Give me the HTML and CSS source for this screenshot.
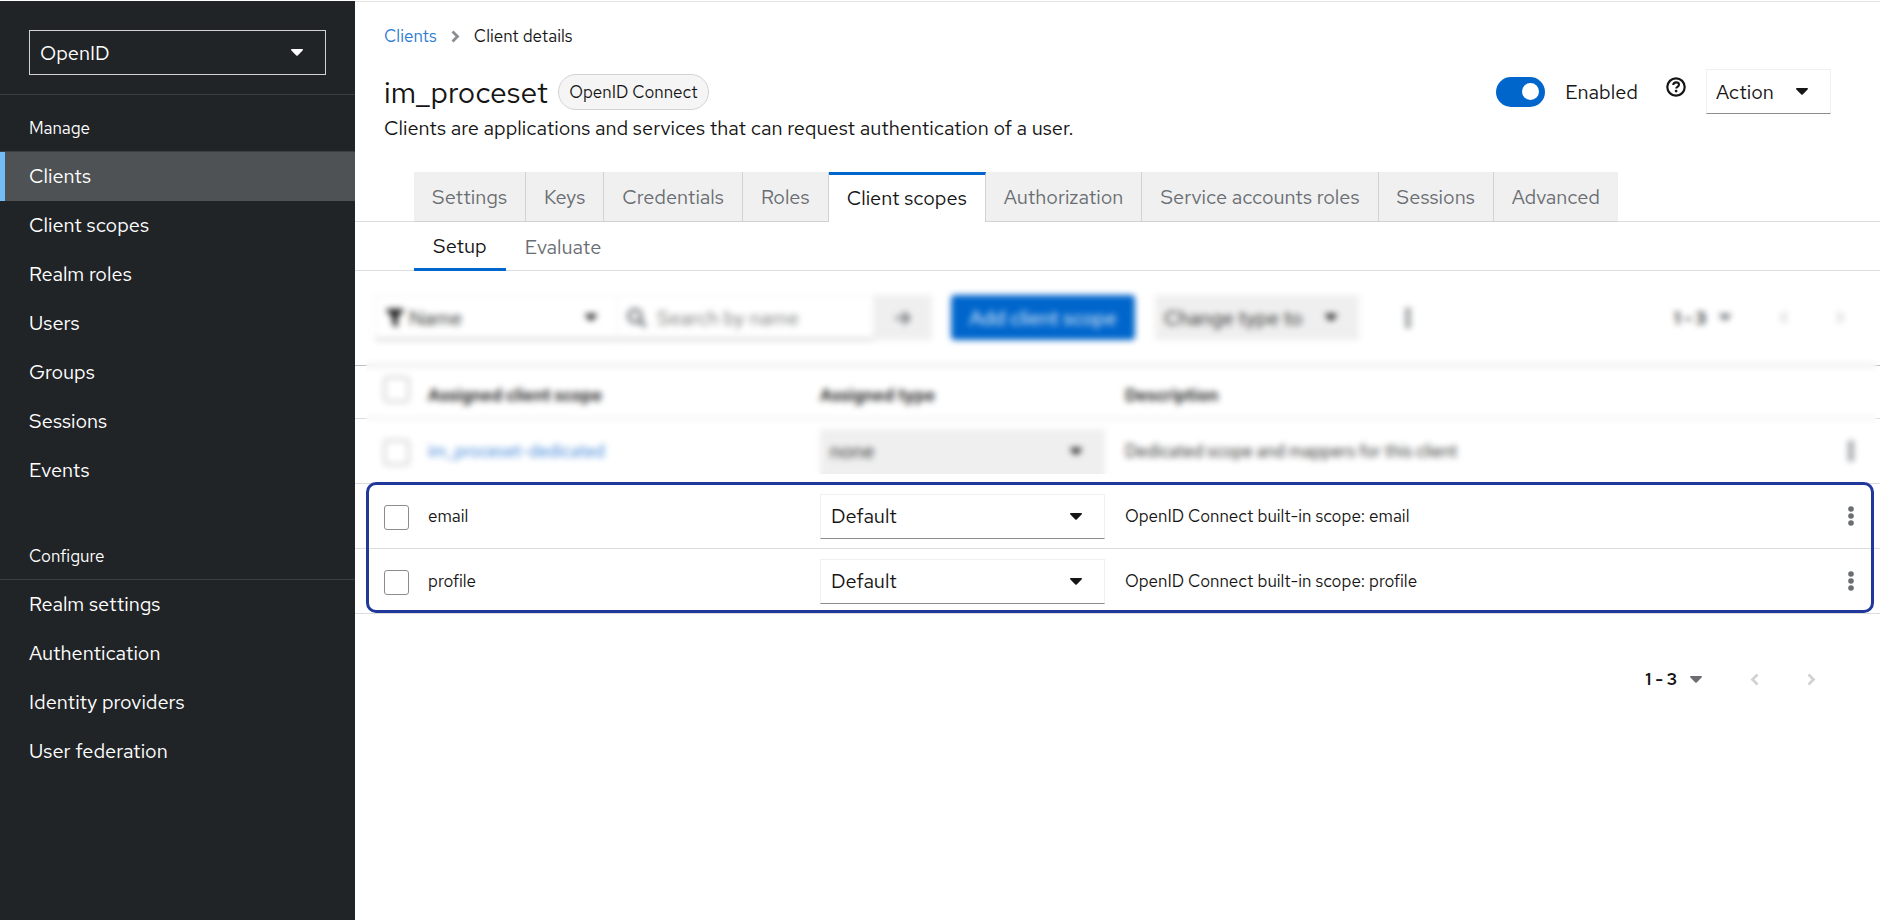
FILE: index.html
```html
<!DOCTYPE html>
<html lang="en">
<head>
<meta charset="utf-8">
<meta name="viewport" content="width=device-width, initial-scale=1">
<title>Client details</title>
<link rel="stylesheet" href="styles.css">
</head>
<body>
<svg class="sprite" aria-hidden="true">
  <symbol id="caret" viewBox="0 0 12 7"><path d="M1 0h10a1 1 0 0 1 .6 1.600L6.700 6.500a1 1 0 0 1-1.400 0L.4 1.600A1 1 0 0 1 1 0z"/></symbol>
  <symbol id="kebab" viewBox="0 0 6 20"><circle cx="3" cy="3" r="2.800"/><circle cx="3" cy="10" r="2.800"/><circle cx="3" cy="17" r="2.800"/></symbol>
  <symbol id="left" viewBox="0 0 9 13"><path d="M7.500 1.500l-5 5 5 5" fill="none" stroke="currentColor" stroke-width="2.800"/></symbol>
  <symbol id="right" viewBox="0 0 9 13"><path d="M1.500 1.500l5 5-5 5" fill="none" stroke="currentColor" stroke-width="2.800"/></symbol>
</svg>
<div class="page">
  <aside class="sidebar">
    <div class="realm">
      <div class="picker">
        <select class="realm-select" aria-label="Realm"><option>OpenID</option></select>
        <svg class="caret"><use href="#caret"/></svg>
      </div>
    </div>
    <nav class="nav" aria-label="Manage">
      <h2 class="nav-title">Manage</h2>
      <a class="nav-link current" href="#clients">Clients</a>
      <a class="nav-link" href="#client-scopes">Client scopes</a>
      <a class="nav-link" href="#realm-roles">Realm roles</a>
      <a class="nav-link" href="#users">Users</a>
      <a class="nav-link" href="#groups">Groups</a>
      <a class="nav-link" href="#sessions">Sessions</a>
      <a class="nav-link" href="#events">Events</a>
    </nav>
    <nav class="nav" aria-label="Configure">
      <h2 class="nav-title">Configure</h2>
      <a class="nav-link" href="#realm-settings">Realm settings</a>
      <a class="nav-link" href="#authentication">Authentication</a>
      <a class="nav-link" href="#identity-providers">Identity providers</a>
      <a class="nav-link" href="#user-federation">User federation</a>
    </nav>
  </aside>
  <main class="main">
    <header class="head">
      <nav class="crumbs" aria-label="Breadcrumb">
        <a href="#clients">Clients</a>
        <svg class="crumb-sep"><use href="#right"/></svg>
        <span>Client details</span>
      </nav>
      <div class="title-row">
        <h1 class="title">im_proceset</h1>
        <span class="badge">OpenID Connect</span>
        <div class="actions">
          <label class="toggle"><input class="switch" type="checkbox" checked>Enabled</label>
          <button class="help" aria-label="Help"><svg viewBox="0 0 20 20"><circle cx="10" cy="10" r="8.700" fill="none" stroke="currentColor" stroke-width="2.200"/><path d="M7.200 8c.2-1.800 1.400-2.600 2.900-2.600 1.700 0 2.900.9 2.900 2.400 0 2-2.800 2-2.800 3.700" fill="none" stroke="currentColor" stroke-width="2.100"/><circle cx="10.100" cy="14.100" r="1.400"/></svg></button>
          <button class="menu-button outlined">Action <svg class="caret"><use href="#caret"/></svg></button>
        </div>
      </div>
      <p class="lead">Clients are applications and services that can request authentication of a user.</p>
    </header>
    <nav class="tabs" aria-label="Client sections">
      <button class="tab">Settings</button><button class="tab">Keys</button><button class="tab">Credentials</button><button class="tab">Roles</button><button class="tab active">Client scopes</button><button class="tab">Authorization</button><button class="tab">Service accounts roles</button><button class="tab">Sessions</button><button class="tab">Advanced</button>
    </nav>
    <nav class="subtabs" aria-label="Client scopes views">
      <button class="subtab active">Setup</button><button class="subtab">Evaluate</button>
    </nav>
    <section class="scopes">
      <div class="toolbar">
        <div class="filter">
          <div class="picker filter-picker">
            <svg class="funnel" viewBox="0 0 18 18"><path d="M1 0h16c1 0 1.300 1 .7 1.600L11.500 8v9c0 .9-.8 1.200-1.500.7l-3-2.200c-.3-.2-.5-.5-.5-.9V8L.3 1.600C-.3 1 0 0 1 0z"/></svg>
            <select class="filter-select" aria-label="Filter by"><option>Name</option></select>
            <svg class="caret"><use href="#caret"/></svg>
          </div>
          <div class="search">
            <svg class="lens" viewBox="0 0 20 20"><circle cx="8" cy="8" r="6.300" fill="none" stroke="currentColor" stroke-width="3"/><path d="M12.500 12.500l6 6" stroke="currentColor" stroke-width="3.400"/></svg>
            <input class="search-input" type="text" placeholder="Search by name" aria-label="Search by name">
          </div>
          <button class="go" aria-label="Search"><svg viewBox="0 0 18 16"><path d="M1 8h14M9 2l6 6-6 6" fill="none" stroke="currentColor" stroke-width="2.600"/></svg></button>
        </div>
        <button class="primary">Add client scope</button>
        <button class="menu-button muted">Change type to <svg class="caret"><use href="#caret"/></svg></button>
        <button class="kebab" aria-label="More actions"><svg><use href="#kebab"/></svg></button>
        <div class="pager">
          <button class="range">1 - 3 <svg class="caret"><use href="#caret"/></svg></button>
          <button class="step" aria-label="Previous page" disabled><svg><use href="#left"/></svg></button>
          <button class="step" aria-label="Next page" disabled><svg><use href="#right"/></svg></button>
        </div>
      </div>
      <table class="table">
        <colgroup><col class="col-check"><col class="col-name"><col class="col-type"><col><col class="col-menu"></colgroup>
        <thead>
          <tr><th><input class="check" type="checkbox" aria-label="Select all"></th><th>Assigned client scope</th><th>Assigned type</th><th>Description</th><th></th></tr>
        </thead>
        <tbody>
          <tr>
            <td><input class="check" type="checkbox" aria-label="Select im_proceset-dedicated"></td>
            <td><a href="#dedicated">im_proceset-dedicated</a></td>
            <td><div class="picker"><select class="type-select" aria-label="Assigned type" disabled><option>none</option></select><svg class="caret"><use href="#caret"/></svg></div></td>
            <td>Dedicated scope and mappers for this client</td>
            <td><button class="kebab" aria-label="Row actions"><svg><use href="#kebab"/></svg></button></td>
          </tr>
          <tr>
            <td><input class="check" type="checkbox" aria-label="Select email"></td>
            <td>email</td>
            <td><div class="picker"><select class="type-select" aria-label="Assigned type"><option>Default</option></select><svg class="caret"><use href="#caret"/></svg></div></td>
            <td>OpenID Connect built-in scope: email</td>
            <td><button class="kebab" aria-label="Row actions"><svg><use href="#kebab"/></svg></button></td>
          </tr>
          <tr>
            <td><input class="check" type="checkbox" aria-label="Select profile"></td>
            <td>profile</td>
            <td><div class="picker"><select class="type-select" aria-label="Assigned type"><option>Default</option></select><svg class="caret"><use href="#caret"/></svg></div></td>
            <td>OpenID Connect built-in scope: profile</td>
            <td><button class="kebab" aria-label="Row actions"><svg><use href="#kebab"/></svg></button></td>
          </tr>
        </tbody>
      </table>
      <div class="veil"></div>
      <div class="highlight"></div>
    </section>
    <div class="pager bottom">
      <button class="range">1 - 3 <svg class="caret"><use href="#caret"/></svg></button>
      <button class="step" aria-label="Previous page" disabled><svg><use href="#left"/></svg></button>
      <button class="step" aria-label="Next page" disabled><svg><use href="#right"/></svg></button>
    </div>
  </main>
</div>
</body>
</html>
```
FILE: styles.css
```css
* { box-sizing: border-box; }
body {
  margin: 0;
  background: #fff;
  color: #151515;
  font: 20px/28px "Red Hat Text", Inter, "Noto Sans", sans-serif;
}
h1, h2, p { margin: 0; font-weight: 400; }
a { color: #2b7bd6; text-decoration: none; }
button, select, input { font: inherit; color: inherit; margin: 0; border-radius: 0; }
button { border: 0; background: none; padding: 0; }
svg { display: block; fill: currentColor; flex: none; }
.sprite { position: absolute; width: 0; height: 0; }
.caret { width: 12px; height: 7px; }

.page { display: flex; min-height: 100vh; padding-top: 1px; }

.sidebar { flex: none; width: 355px; background: #212427; color: #fff; }
.realm { padding: 29px 29px 19px; border-bottom: 1px solid #3c3f42; }
.picker { display: grid; align-items: center; }
.picker > * { grid-area: 1 / 1; }
.picker > .caret { justify-self: end; margin-right: 23px; pointer-events: none; }
.picker select { appearance: none; width: 100%; height: 45px; padding: 0 10px; background: transparent; opacity: 1; }
.picker .realm-select { border: 1px solid #d2d2d2; }
.nav { padding-bottom: 28px; }
.nav-title { padding: 19px 29px 9px; border-bottom: 1px solid #3c3f42; font-size: 17px; }
.nav-link { display: block; padding: 10px 29px 11px; color: #fff; }
.nav-link.current { background: #4f5255; border-left: 5px solid #73bcf7; padding-left: 24px; }

.main { flex: 1; min-width: 0; border-top: 1px solid #e4e4e4; }
.head { padding: 20px 49px 0 29px; }
.crumbs { display: flex; align-items: center; gap: 14px; font-size: 17px; }
.crumb-sep { width: 9px; height: 13px; color: #8a8d90; }
.title-row { display: flex; align-items: center; min-height: 45px; margin-top: 19px; }
.title { font-size: 30px; line-height: 36px; }
.badge { margin-left: 10px; padding: 3px 10px; border: 1px solid #d2d2d2; border-radius: 18px; background: #f5f5f5; font-size: 17px; }
.actions { display: flex; align-items: center; margin-left: auto; }
.toggle { display: flex; align-items: center; gap: 20px; }
.switch { appearance: none; display: flex; justify-content: flex-end; align-items: center; width: 49px; height: 30px; padding: 6px; border-radius: 15px; background: #06c; }
.switch::before { content: ""; width: 17px; height: 17px; border-radius: 50%; background: #fff; }
.help { align-self: flex-start; margin: 8px 20px 0 28px; }
.help svg { width: 20px; height: 20px; }
.menu-button { display: flex; align-items: center; justify-content: space-between; height: 45px; padding: 0 22px 0 9px; }
.outlined { width: 125px; border: 1px solid #f0f0f0; border-bottom-color: #8a8d90; }
.muted { width: 204px; background: #efefef; }
.lead { margin-top: 0; }

.tabs { display: flex; margin-top: 30px; padding-left: 59px; box-shadow: inset 0 -1px #dcdcdc; }
.tab { height: 50px; padding: 0 18px; border-right: 1px solid #d2d2d2; border-bottom: 1px solid #d2d2d2; background: #f0f0f0; color: #6a6e73; }
.tab:last-child { border-right: 0; }
.tab.active { border-top: 3px solid #06c; border-bottom: 0; padding-bottom: 2px; background: #fff; color: #151515; }
.subtabs { display: flex; padding-left: 59px; box-shadow: inset 0 -1px #dcdcdc; }
.subtab { height: 49px; padding: 0 19px; color: #6a6e73; }
.subtab.active { border-bottom: 3px solid #06c; padding-top: 2px; color: #151515; }

.scopes { position: relative; }
.toolbar { display: flex; align-items: center; padding: 24px 29px 25px 20px; }
.filter { display: flex; margin-right: 19px; }
.filter-picker { width: 243px; border: 1px solid #f0f0f0; border-bottom-color: #8a8d90; }
.filter-picker > .caret { margin-right: 20px; }
.funnel { width: 18px; height: 18px; margin-left: 10px; }
.picker .filter-select { height: 43px; padding-left: 33px; border: 0; }
.search { display: flex; align-items: center; gap: 10px; width: 256px; padding-left: 9px; border: 1px solid #f0f0f0; border-left: 0; border-bottom-color: #8a8d90; color: #6a6e73; }
.lens { width: 20px; height: 20px; }
.search-input { width: 100%; min-width: 0; border: 0; padding: 0; background: none; }
.search-input::placeholder { color: #757575; opacity: 1; }
.go { display: grid; place-items: center; width: 58px; background: #efefef; color: #6a6e73; }
.go svg { width: 18px; height: 16px; }
.primary { width: 184px; height: 45px; margin-right: 20px; border-radius: 4px; background: #06c; color: #fff; }
.kebab { display: flex; justify-content: center; color: #6a6e73; }
.kebab svg { width: 6px; height: 20px; }
.toolbar .kebab { margin-left: 46px; }
.pager { display: flex; align-items: center; margin-left: auto; font-size: 17px; }
.range { display: flex; align-items: center; gap: 13px; font-weight: 600; }
.range .caret { color: #6a6e73; }
.step { margin-left: 48px; color: #d2d2d2; }
.step svg { width: 9px; height: 13px; }
.toolbar .pager { padding-right: 6px; }
.bottom { justify-content: flex-end; padding: 51px 64px 0 0; }

.table { width: 100%; table-layout: fixed; border-collapse: collapse; border-top: 1px solid #c0c0c0; font-size: 17px; line-height: 26px; }
.col-check { width: 73px; }
.col-name { width: 25.7%; }
.col-type { width: 20%; }
.col-menu { width: 60px; }
.table th, .table td { padding: 0 20px 0 0; text-align: left; vertical-align: middle; border-bottom: 1px solid #dcdcdc; }
.table th { height: 53px; padding-top: 6px; font-weight: 600; }
.table td { height: 65px; }
.table th:first-child, .table td:first-child { padding-left: 29px; padding-right: 0; }
.table th:first-child { padding-top: 0; padding-bottom: 6px; }
.table td:first-child { padding-top: 2px; }
.table td:last-child { padding: 0 26px 0 0; }
.table td .kebab { margin-left: auto; }
.check { appearance: none; display: block; width: 25px; height: 25px; border: 1px solid #8a8d90; border-radius: 3px; background: #fff; }
.type-select { font-size: 20px; border: 1px solid #f0f0f0; border-bottom-color: #8a8d90; }
.picker .type-select:disabled { background: #efefef; border: 0; color: #151515; }

.veil { position: absolute; top: 4px; bottom: 140px; left: 11px; right: 3px; backdrop-filter: blur(3px); }
.highlight { position: absolute; bottom: 1px; left: 11px; right: 6px; height: 131px; border: 3px solid #20389b; border-radius: 10px; }
```
